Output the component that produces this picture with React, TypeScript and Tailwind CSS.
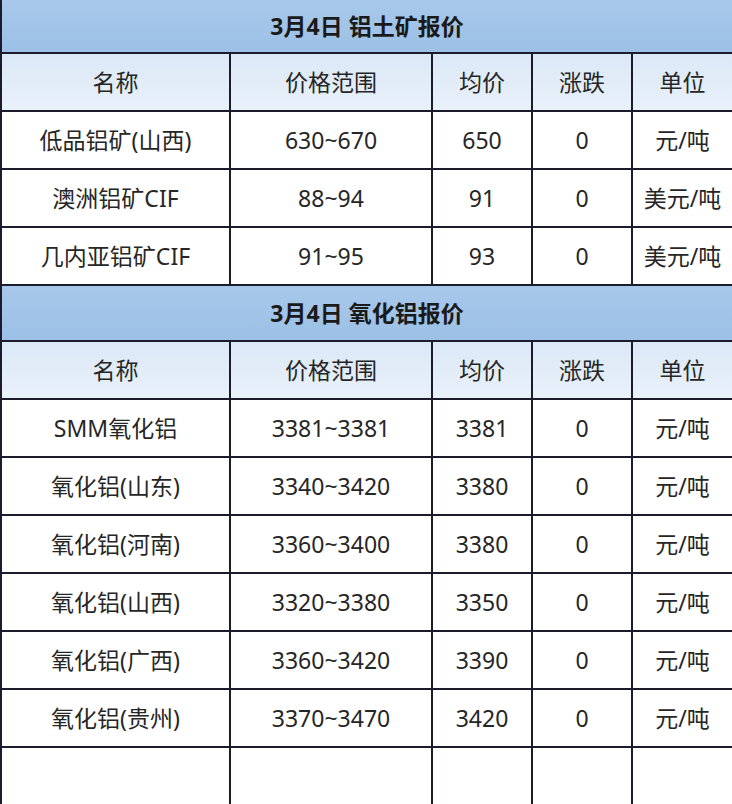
import React from "react";

// Price tables: bauxite + alumina quotes
const COLS = "grid grid-cols-[227px_202px_100px_100px_101px]";

const cellText = "flex items-center justify-center text-[23px] text-[#262626]";

interface Row {
  name: string;
  range: string;
  avg: string;
  change: string;
  unit: string;
}

const bauxite: Row[] = [
  { name: "低品铝矿(山西)", range: "630~670", avg: "650", change: "0", unit: "元/吨" },
  { name: "澳洲铝矿CIF", range: "88~94", avg: "91", change: "0", unit: "美元/吨" },
  { name: "几内亚铝矿CIF", range: "91~95", avg: "93", change: "0", unit: "美元/吨" },
];

const alumina: Row[] = [
  { name: "SMM氧化铝", range: "3381~3381", avg: "3381", change: "0", unit: "元/吨" },
  { name: "氧化铝(山东)", range: "3340~3420", avg: "3380", change: "0", unit: "元/吨" },
  { name: "氧化铝(河南)", range: "3360~3400", avg: "3380", change: "0", unit: "元/吨" },
  { name: "氧化铝(山西)", range: "3320~3380", avg: "3350", change: "0", unit: "元/吨" },
  { name: "氧化铝(广西)", range: "3360~3420", avg: "3390", change: "0", unit: "元/吨" },
  { name: "氧化铝(贵州)", range: "3370~3470", avg: "3420", change: "0", unit: "元/吨" },
];

const TitleRow: React.FC<{ title: string; height: string }> = ({ title, height }) => (
  <div
    className={`${height} flex items-center justify-center border-b-2 border-[#1b1b2b] bg-gradient-to-b from-[#a7c8ea] to-[#9cc0e6] text-[23px] font-bold text-[#1a1a1a]`}
  >
    {title}
  </div>
);

const HeaderRow: React.FC = () => (
  <div className={`${COLS} h-[58px] border-b-2 border-[#1b1b2b] bg-gradient-to-b from-[#dbe8f6] to-[#e9f1fa]`}>
    {["名称", "价格范围", "均价", "涨跌", "单位"].map((h, i) => (
      <div key={h} className={`${cellText} ${i > 0 ? "border-l-2 border-[#1b1b2b]" : ""}`}>
        {h}
      </div>
    ))}
  </div>
);

const DataRow: React.FC<{ row?: Row }> = ({ row }) => {
  const vals = row ? [row.name, row.range, row.avg, row.change, row.unit] : ["", "", "", "", ""];
  return (
    <div className={`${COLS} h-[58px] border-b-2 border-[#1b1b2b] bg-white`}>
      {vals.map((v, i) => (
        <div key={i} className={`${cellText} ${i > 0 ? "border-l-2 border-[#1b1b2b]" : ""}`}>
          {v}
        </div>
      ))}
    </div>
  );
};

export default function App() {
  return (
    <div
      className="w-[732px] h-[804px] overflow-hidden bg-white"
      style={{ fontFamily: '"Noto Sans", "Noto Sans CJK SC", sans-serif' }}
    >
      <div className="border-l-2 border-[#1b1b2b]">
        <TitleRow title="3月4日 铝土矿报价" height="h-[54px]" />
        <HeaderRow />
        {bauxite.map((r) => (
          <DataRow key={r.name} row={r} />
        ))}
        <TitleRow title="3月4日 氧化铝报价" height="h-[56px]" />
        <HeaderRow />
        {alumina.map((r) => (
          <DataRow key={r.name} row={r} />
        ))}
        <DataRow />
      </div>
    </div>
  );
}
